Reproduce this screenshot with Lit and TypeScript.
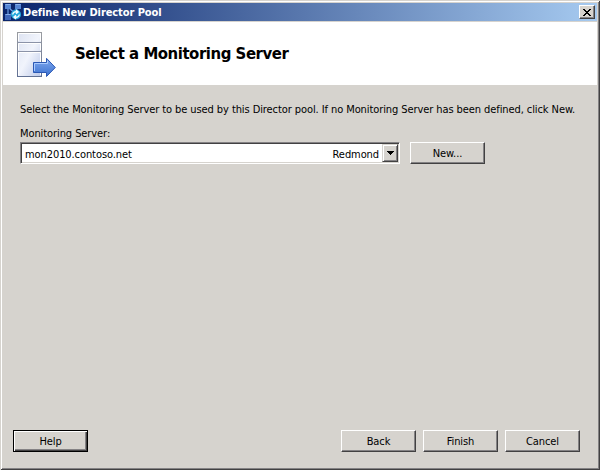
import { LitElement, html, css } from "lit";
import { customElement, property } from "lit/decorators.js";

@customElement("dialog-button")
class DialogButton extends LitElement {
  @property({ type: Boolean, reflect: true }) focused = false;
  static styles = css`
    :host { display: block; width: 75px; height: 22px; flex: none; }
    .face {
      box-sizing: border-box; width: 100%; height: 100%; padding: 1px 0 0;
      display: flex; align-items: center; justify-content: center;
      font: inherit; letter-spacing: inherit; color: #000; background: #d6d3ce; border-radius: 0;
      border: 1px solid; border-color: #fff #424142 #424142 #fff;
      box-shadow: inset -1px -1px #848284;
    }
    :host([focused]) .face {
      border-color: #000;
      box-shadow: inset 1px 1px #fff, inset -1px -1px #424142, inset -2px -2px #848284;
    }
  `;
  render() {
    return html`<button class="face"><slot></slot></button>`;
  }
}

@customElement("app-root")
class AppRoot extends LitElement {
  static styles = css`
    :host {
      display: flex; flex-direction: column; box-sizing: border-box;
      width: 600px; height: 470px; padding: 3px;
      background: #d6d3ce;
      box-shadow: inset 1px 1px #d6d3ce, inset -1px -1px #424142,
        inset 2px 2px #fff, inset -2px -2px #848284;
      font: 11px/14px "DejaVu Sans Condensed", "DejaVu Sans", sans-serif;
      font-stretch: condensed; letter-spacing: -0.085px;
      color: #000; white-space: nowrap; overflow: hidden;
    }
    .title {
      display: flex; align-items: center; height: 18px; flex: none;
      padding: 0 2px; color: #fff; font-weight: bold;
      background: linear-gradient(90deg, #0a246a, #a6caf0);
    }
    .title-icon { width: 17px; height: 16px; margin-right: 1px; }
    .title-text { flex: 1; padding-top: 2px; }
    .close {
      box-sizing: border-box; width: 16px; height: 14px; padding: 0;
      display: flex; align-items: center; justify-content: center;
      background: #d6d3ce; border: 1px solid; border-color: #fff #424142 #424142 #fff;
      box-shadow: inset -1px -1px #848284;
    }
    .header {
      display: flex; align-items: center; height: 63px; flex: none; margin-top: 1px;
      background: #fff; box-sizing: border-box; padding-left: 13px;
    }
    .server { width: 42px; height: 48px; margin-top: 1px; }
    .heading {
      margin: 0 0 0 17px; padding-top: 1px; font-size: 16.6px; line-height: 20px;
      font-weight: bold; letter-spacing: -0.46px;
    }
    .content { flex: 1; padding: 18px 17px 0; }
    .label { margin-top: 10px; }
    .row { display: flex; gap: 10px; margin-top: 1px; }
    .combo {
      box-sizing: border-box; width: 380px; height: 22px; display: flex; align-items: center;
      background: #fff; border: 1px solid; border-color: #848284 #fff #fff #848284;
      box-shadow: inset 1px 1px #424142, inset -1px -1px #d6d3ce;
      padding: 1px 1px 1px 4px;
    }
    .value { flex: 1; padding-top: 3px; }
    .site { padding-top: 3px; margin-right: 3px; }
    .drop {
      box-sizing: border-box; width: 16px; height: 18px; display: flex;
      align-items: center; justify-content: center; background: #d6d3ce;
      border: 1px solid; border-color: #d6d3ce #424142 #424142 #d6d3ce;
      box-shadow: inset 1px 1px #fff, inset -1px -1px #848284;
    }
    .footer { display: flex; gap: 7px; padding: 0 17px 15px 10px; }
    .spacer { flex: 1; }
  `;
  render() {
    return html`
      <div class="title">
        <svg class="title-icon" viewBox="0 0 17 16">
          <path d="M4 4L13 12M13 4L4 12M3 4V12" stroke="#6f9fe4" stroke-width="1.2" />
          <rect x="0" y="0" width="6" height="5" fill="#5686d4" />
          <rect x="10" y="0" width="6" height="5" fill="#5686d4" />
          <rect x="0" y="10" width="6" height="6" fill="#3f66b8" />
          <path d="M.5 .5H5.5M10.5 .5H15.5M.5 10.5H5.5" stroke="#86aeea" />
          <circle cx="11" cy="10.5" r="5" fill="#22a9dc" />
          <path d="M7.7 10.5C8 8 10 7.4 12 7.8M11 6l2 2-2 1.6M14.3 10.5C14 13 12 13.6 10 13.2M11 15l-2-2 2-1.6"
            fill="none" stroke="#f4fdff" stroke-width="1.4" />
        </svg>
        <span class="title-text">Define New Director Pool</span>
        <button class="close" aria-label="Close">
          <svg width="8" height="7" viewBox="0 0 8 7" shape-rendering="crispEdges">
            <path d="M0 0h2v1h1v1h2V1h1V0h2v1H7v1H6v1H5v1h1v1h1v1h1v1H6V6H5V5H3v1H2v1H0V6h1V5h1V4h1V3H2V2H1V1H0z" />
          </svg>
        </button>
      </div>
      <div class="header">
        <svg class="server" viewBox="0 0 42 48">
          <defs>
            <linearGradient id="body" x2="1" y2="1"><stop stop-color="#dce2f1" /><stop offset=".5" stop-color="#f1f4fc" /><stop offset="1" stop-color="#bac7e8" /></linearGradient>
            <linearGradient id="edge" x2="0" y2="1"><stop stop-color="#9b9da2" /><stop offset="1" stop-color="#607093" /></linearGradient>
            <linearGradient id="arrow" x2="0" y2="1"><stop stop-color="#82aaf0" /><stop offset="1" stop-color="#3970cf" /></linearGradient>
          </defs>
          <rect x="1.5" y="2.5" width="24" height="44" fill="url(#body)" stroke="url(#edge)" />
          <path d="M2.5 11V3.5H24.5V11M2.5 20V13.5H24.5V20M2.5 45V22.5H24.5V45" fill="none" stroke="#fff" />
          <path d="M2 12.5H25M2 21.5H25" stroke="#8b93a8" />
          <path d="M17.5 32.5H30.5V28.3L39.3 37.5L30.5 46.5V42.5H17.5Z" fill="url(#arrow)" stroke="#2b58b4" />
          <path d="M18.5 41V33.5H31.5V30.8" fill="none" stroke="#a9caff" />
        </svg>
        <h1 class="heading">Select a Monitoring Server</h1>
      </div>
      <div class="content">
        <div class="intro">Select the Monitoring Server to be used by this Director pool. If no Monitoring Server has been defined, click New.</div>
        <div class="label">Monitoring Server:</div>
        <div class="row">
          <div class="combo">
            <span class="value">mon2010.contoso.net</span>
            <span class="site">Redmond</span>
            <span class="drop"><svg width="7" height="4" viewBox="0 0 7 4" shape-rendering="crispEdges"><path d="M0 0h7v1H6v1H5v1H4v1H3V3H2V2H1V1H0z" /></svg></span>
          </div>
          <dialog-button>New...</dialog-button>
        </div>
      </div>
      <div class="footer">
        <dialog-button focused>Help</dialog-button>
        <span class="spacer"></span>
        <dialog-button>Back</dialog-button>
        <dialog-button>Finish</dialog-button>
        <dialog-button>Cancel</dialog-button>
      </div>
    `;
  }
}
